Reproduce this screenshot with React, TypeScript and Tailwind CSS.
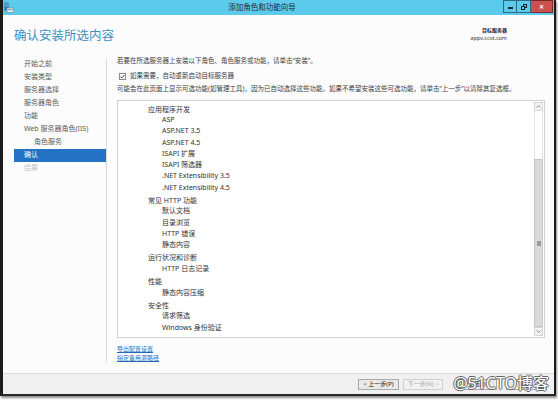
import React from 'react'

// Left-hand wizard steps
const steps = [
  { label: '开始之前' },
  { label: '安装类型' },
  { label: '服务器选择' },
  { label: '服务器角色' },
  { label: '功能' },
  { label: 'Web 服务器角色(IIS)' },
  { label: '角色服务', indent: true },
  { label: '确认', active: true },
  { label: '结果', disabled: true },
]

// Role services that are about to be installed
const groups = [
  {
    title: '应用程序开发',
    items: ['ASP', 'ASP.NET 3.5', 'ASP.NET 4.5', 'ISAPI 扩展', 'ISAPI 筛选器', '.NET Extensibility 3.5', '.NET Extensibility 4.5'],
  },
  { title: '常见 HTTP 功能', items: ['默认文档', '目录浏览', 'HTTP 错误', '静态内容'] },
  { title: '运行状况和诊断', items: ['HTTP 日志记录'] },
  { title: '性能', items: ['静态内容压缩'] },
  { title: '安全性', items: ['请求筛选', 'Windows 身份验证'] },
]

function TitleBar() {
  return (
    <div className="relative flex h-[15px] shrink-0 items-center bg-[#5ccbeb]">
      {/* app icon */}
      <svg className="absolute left-[1px] top-[2px]" width="10" height="11" viewBox="0 0 10 11">
        <rect x="0.5" y="0.5" width="4" height="8" fill="#2f6fb0" />
        <rect x="1.5" y="1.5" width="2" height="1" fill="#bfe3f7" />
        <rect x="1.5" y="3.5" width="2" height="1" fill="#bfe3f7" />
        <rect x="3" y="6" width="6.5" height="4.5" fill="#e8eef2" stroke="#6b7f8c" strokeWidth="0.6" />
        <rect x="4" y="7" width="4.5" height="1.2" fill="#8aa2b2" />
      </svg>
      <div className="flex flex-1 justify-center pr-[33px] text-[7.5px] leading-none text-[#1b2a33]">
        添加角色和功能向导
      </div>
      <div className="absolute right-[1px] top-0 flex h-[13px]">
        <div className="flex w-[14px] items-center justify-center border border-[#2b6b84] bg-[#5ccbeb]">
          <div className="mt-[3px] h-[2px] w-[5px] bg-[#10222b]" />
        </div>
        <div className="flex w-[14px] items-center justify-center border border-l-0 border-[#2b6b84] bg-[#5ccbeb]">
          <div className="relative h-[6px] w-[6px]">
            <div className="absolute right-0 top-0 h-[4px] w-[4px] border border-[#10222b]" />
            <div className="absolute bottom-0 left-0 h-[4px] w-[4px] border-[1.5px] border-[#10222b] bg-[#5ccbeb]" />
          </div>
        </div>
        <div className="flex w-[22px] items-center justify-center border border-l-0 border-[#7a2a2a] bg-[#c9524f] text-[8px] font-bold leading-none text-white">
          ×
        </div>
      </div>
    </div>
  )
}

function Scrollbar() {
  return (
    <div className="flex w-[10px] shrink-0 flex-col py-[1px] pr-[1px]">
      <div className="flex h-[9px] items-center justify-center border border-[#d4d4d4] bg-[#f4f4f4]">
        <svg width="5" height="3" viewBox="0 0 5 3">
          <path d="M0.5 2.5 L2.5 0.6 L4.5 2.5" fill="none" stroke="#777" strokeWidth="0.8" />
        </svg>
      </div>
      <div className="h-[48px] border-x border-[#e4e4e4] bg-white" />
      <div className="flex flex-1 items-center justify-center border border-[#c8c8c8] bg-[#dadada]">
        <div className="h-[5px] w-[4px] bg-[#9a9a9a]" />
      </div>
      <div className="flex h-[9px] items-center justify-center border border-[#d4d4d4] bg-[#f4f4f4]">
        <svg width="5" height="3" viewBox="0 0 5 3">
          <path d="M0.5 0.5 L2.5 2.4 L4.5 0.5" fill="none" stroke="#777" strokeWidth="0.8" />
        </svg>
      </div>
    </div>
  )
}

function WizardButton({ label, disabled }: { label: string; disabled?: boolean }) {
  return (
    <div
      className={
        disabled
          ? 'flex h-[11px] w-[40px] items-center justify-center border border-[#cfcfcf] bg-[#f2f2f2] text-[6px] leading-none text-[#a8a8a8]'
          : 'flex h-[11px] w-[41px] items-center justify-center border border-[#a9a9a9] bg-[#e9e9e9] text-[6px] leading-none text-[#222]'
      }
    >
      {label}
    </div>
  )
}

export default function App() {
  return (
    <div className="relative h-[400px] w-[558px] overflow-hidden bg-white font-['Noto_Sans','Noto_Sans_CJK_SC',sans-serif]">
      <div className="flex h-[396px] w-[556px] flex-col border-x-[3px] border-b-[2px] border-x-[#1c1c1c] border-b-[#2a2a2a] border-r-[2px] shadow-[1px_2px_2px_rgba(0,0,0,0.45)]">
        <TitleBar />

        <div className="flex flex-1 flex-col bg-[#fcfcfc]">
          {/* page header */}
          <div className="flex h-[41px] shrink-0 items-start justify-between pl-[11px] pr-[47px]">
            <h1 className="pt-[13px] text-[12.5px] leading-[16px] text-[#3d8fc1]">确认安装所选内容</h1>
            <div className="flex flex-col items-end pt-[13px] leading-none">
              <span className="text-[5px] font-bold text-[#222]">目标服务器</span>
              <span className="mt-[3px] text-[5.5px] text-[#333]">appv.ccvt.com</span>
            </div>
          </div>

          <div className="flex flex-1">
            {/* step list */}
            <div className="mb-[11px] mt-[2px] flex w-[104px] shrink-0 flex-col border-r border-[#dcdcdc] pl-[11px]">
              {steps.map((s) => (
                <div
                  key={s.label}
                  className={
                    s.active
                      ? 'flex h-[13px] items-center bg-[#2472c4] pl-[10px] text-[7px] text-white'
                      : s.disabled
                        ? 'flex h-[13px] items-center pl-[10px] text-[7px] text-[#c4c4c4]'
                        : s.indent
                          ? 'flex h-[13px] items-center pl-[20px] text-[7px] text-[#5a5a5a]'
                          : 'flex h-[13px] items-center pl-[10px] text-[7px] text-[#5a5a5a]'
                  }
                >
                  {s.label}
                </div>
              ))}
            </div>

            {/* confirmation content */}
            <div className="flex flex-1 flex-col pl-[10px] pr-[9px] text-[#3c3c3c]">
              <p className="flex h-[11px] items-center text-[6.5px] leading-none">
                若要在所选服务器上安装以下角色、角色服务或功能，请单击“安装”。
              </p>
              <div className="mt-[4px] flex h-[10px] items-center text-[6.5px] leading-none">
                <div className="ml-[2px] mr-[4px] flex h-[7px] w-[7px] items-center justify-center border border-[#8a8a8a] bg-white">
                  <svg width="5" height="5" viewBox="0 0 5 5">
                    <path d="M0.6 2.6 L1.9 3.9 L4.4 0.9" fill="none" stroke="#222" strokeWidth="0.9" />
                  </svg>
                </div>
                如果需要，自动重新启动目标服务器
              </div>
              <p className="mt-[3px] flex h-[10px] items-center text-[6.5px] leading-none">
                可能会在此页面上显示可选功能(如管理工具)，因为已自动选择这些功能。如果不希望安装这些可选功能，请单击“上一步”以清除其复选框。
              </p>

              <div className="mt-[6px] flex h-[238px] border border-[#d2d2d2] bg-white">
                <div className="flex flex-1 flex-col pl-[30px] pt-[3px] text-[7px] leading-none text-[#333]">
                  {groups.map((g, i) => (
                    <div key={g.title} className={i === 0 ? 'flex flex-col' : 'mt-[2.5px] flex flex-col'}>
                      <div className="flex h-[10px] items-center">{g.title}</div>
                      {g.items.map((item) => (
                        <div key={item} className="flex h-[11.25px] items-center pl-[14px]">
                          {item}
                        </div>
                      ))}
                    </div>
                  ))}
                </div>
                <Scrollbar />
              </div>

              <div className="mt-[6px] flex flex-col items-start text-[6px] leading-none text-[#1f6db5]">
                <span className="flex h-[9px] items-center underline">导出配置设置</span>
                <span className="flex h-[9px] items-center underline">指定备用源路径</span>
              </div>
            </div>
          </div>

          {/* footer buttons */}
          <div className="flex h-[21px] shrink-0 items-center justify-end border-t border-[#dedede] bg-[#f0f0f0] pr-[7px]">
            <WizardButton label="< 上一步(P)" />
            <div className="ml-[4px]">
              <WizardButton label="下一步(N) >" disabled />
            </div>
            <div className="ml-[13px]">
              <WizardButton label="安装(I)" />
            </div>
            <div className="ml-[9px]">
              <WizardButton label="取消" />
            </div>
          </div>
        </div>
      </div>

      {/* site watermark over the footer */}
      <div className="absolute bottom-[9px] right-[9px] text-[16px] leading-none text-white [text-shadow:-1px_0_#666,1px_0_#666,0_-1px_#666,0_1px_#666]">
        @51CTO博客
      </div>
    </div>
  )
}
